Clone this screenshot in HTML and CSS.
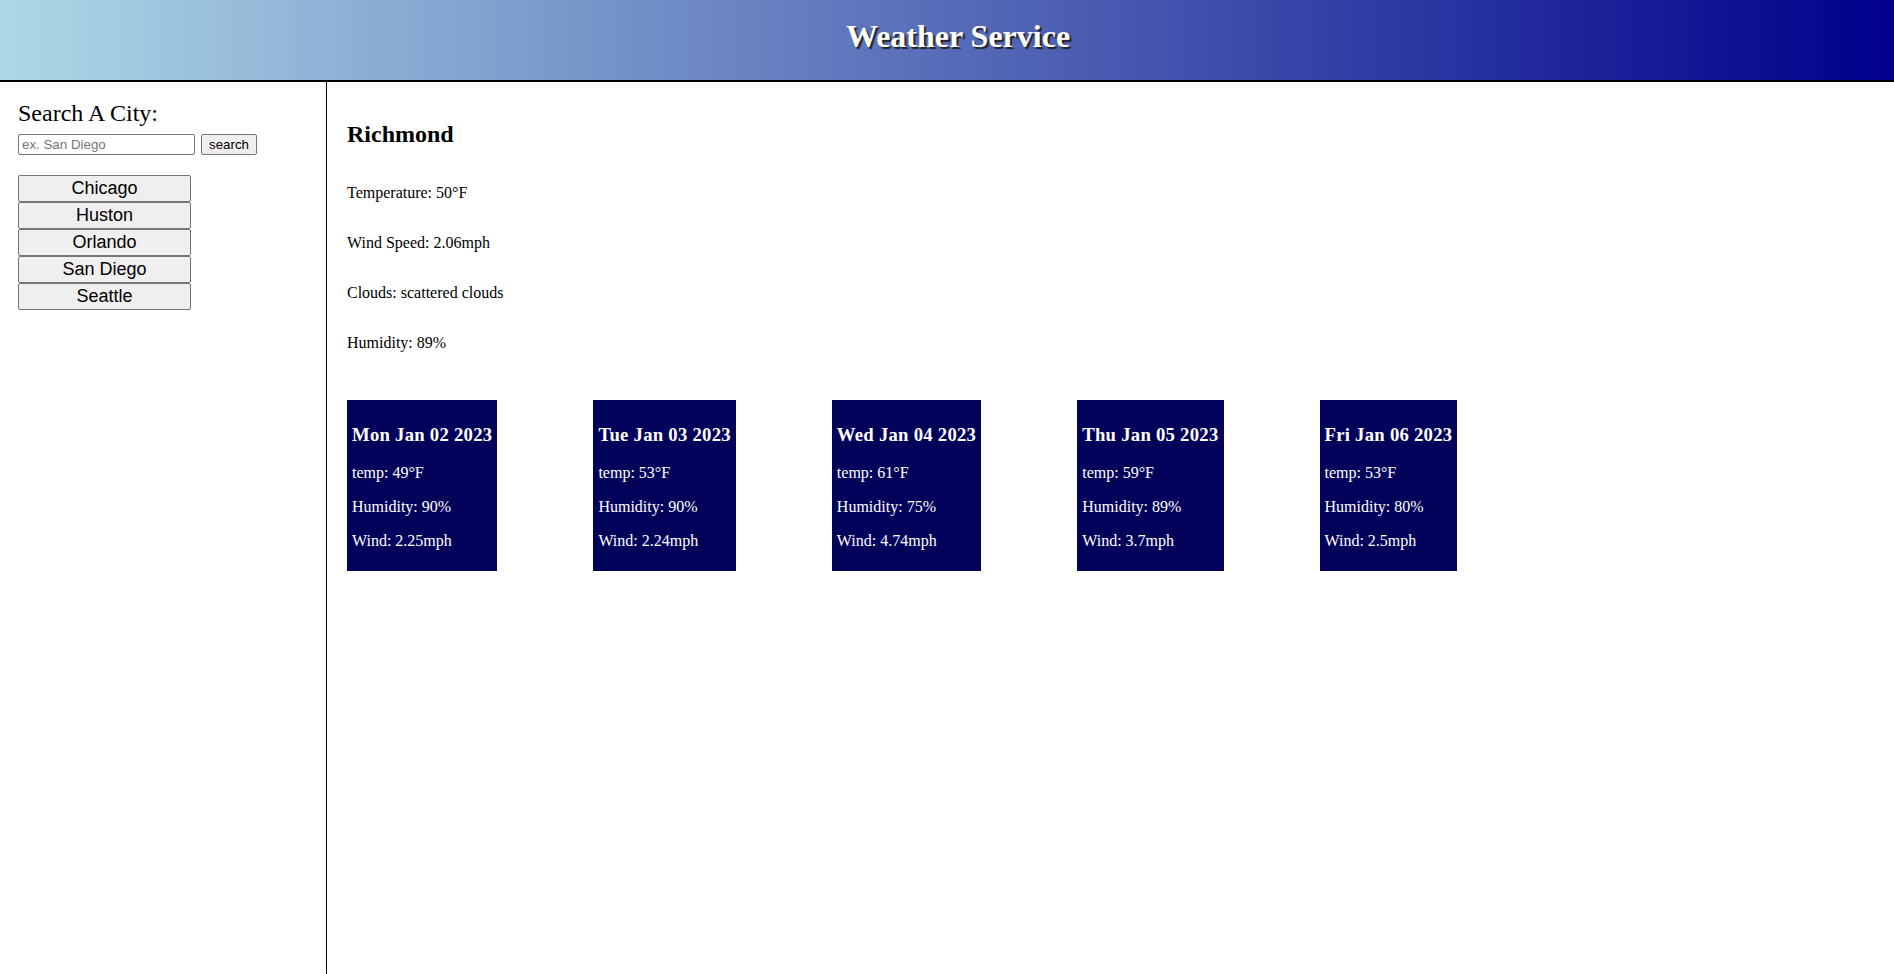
FILE: index.html
```html
<!DOCTYPE html>
<html lang="en">
<head>
<meta charset="utf-8">
<title>Weather Service</title>
<link rel="stylesheet" href="styles.css">
</head>
<body>
<header class="site-header">
  <h1 class="site-title">Weather Service</h1>
</header>
<div class="layout">
  <aside class="sidebar">
    <label class="search-label" for="city">Search A City:</label>
    <div class="search-row">
      <input id="city" class="search-input" type="text" placeholder="ex. San Diego">
      <button class="search-btn" type="button">search</button>
    </div>
    <div class="city-list">
      <button class="city-btn" type="button">Chicago</button>
      <button class="city-btn" type="button">Huston</button>
      <button class="city-btn" type="button">Orlando</button>
      <button class="city-btn" type="button">San Diego</button>
      <button class="city-btn" type="button">Seattle</button>
    </div>
  </aside>
  <main class="main">
    <h2 class="city-name">Richmond</h2>
    <p class="info">Temperature: 50°F</p>
    <p class="info">Wind Speed: 2.06mph</p>
    <p class="info">Clouds: scattered clouds</p>
    <p class="info">Humidity: 89%</p>
    <div class="forecast">
      <div class="card">
        <h3 class="card-date">Mon Jan 02 2023</h3>
        <p class="card-line">temp: 49°F</p>
        <p class="card-line">Humidity: 90%</p>
        <p class="card-line">Wind: 2.25mph</p>
      </div>
      <div class="card">
        <h3 class="card-date">Tue Jan 03 2023</h3>
        <p class="card-line">temp: 53°F</p>
        <p class="card-line">Humidity: 90%</p>
        <p class="card-line">Wind: 2.24mph</p>
      </div>
      <div class="card">
        <h3 class="card-date">Wed Jan 04 2023</h3>
        <p class="card-line">temp: 61°F</p>
        <p class="card-line">Humidity: 75%</p>
        <p class="card-line">Wind: 4.74mph</p>
      </div>
      <div class="card">
        <h3 class="card-date">Thu Jan 05 2023</h3>
        <p class="card-line">temp: 59°F</p>
        <p class="card-line">Humidity: 89%</p>
        <p class="card-line">Wind: 3.7mph</p>
      </div>
      <div class="card">
        <h3 class="card-date">Fri Jan 06 2023</h3>
        <p class="card-line">temp: 53°F</p>
        <p class="card-line">Humidity: 80%</p>
        <p class="card-line">Wind: 2.5mph</p>
      </div>
    </div>
  </main>
</div>
</body>
</html>
```
FILE: styles.css
```css
html, body {
  margin: 0;
  padding: 0;
}
body {
  font-family: "Liberation Serif", "Times New Roman", serif;
  font-size: 16px;
  color: #000;
  background: #fff;
}
.site-header {
  height: 82px;
  box-sizing: border-box;
  padding-top: 18px;
  padding-left: 22px;
  background: linear-gradient(to right, #add8e6, #00008b);
  border-bottom: 2px solid #000;
  text-align: center;
}
.site-title {
  margin: 0;
  font-size: 32px;
  font-weight: bold;
  color: #fff;
  text-shadow: 2px 2px 1px #222;
}
.layout {
  display: flex;
  min-height: calc(100vh - 82px);
}
.sidebar {
  width: 327px;
  flex: none;
  box-sizing: border-box;
  padding: 18px;
  border-right: 1px solid #000;
}
.search-label {
  display: block;
  font-size: 24px;
  margin-bottom: 7px;
}
.search-row {
  display: flex;
  gap: 6px;
  align-items: center;
}
.search-input {
  width: 177px;
  height: 21px;
  box-sizing: border-box;
  margin: 0;
  padding: 1px 3px;
  border: 1px solid #767676;
  border-radius: 2px;
  font-family: "Liberation Sans", Arial, sans-serif;
  font-size: 13.33px;
}
.search-input::placeholder {
  color: #757575;
}
.search-btn {
  height: 21px;
  box-sizing: border-box;
  margin: 0;
  padding: 1px 7px;
  border: 1px solid #767676;
  border-radius: 2px;
  background: #efefef;
  color: #000;
  font-family: "Liberation Sans", Arial, sans-serif;
  font-size: 13.33px;
  line-height: 15px;
}
.city-list {
  margin-top: 20px;
  display: flex;
  flex-direction: column;
}
.city-btn {
  width: 173px;
  height: 27px;
  box-sizing: border-box;
  margin: 0;
  padding: 2px 6px;
  border: 1px solid #767676;
  border-radius: 2px;
  background: #efefef;
  color: #000;
  font-family: "Liberation Sans", Arial, sans-serif;
  font-size: 18px;
  line-height: 21px;
  text-align: center;
}
.main {
  flex: 1;
  padding: 19px 20px;
}
.city-name {
  font-size: 24px;
  font-weight: bold;
  margin: 20px 0 36px;
}
.info {
  margin: 32px 0;
}
.forecast {
  display: flex;
  align-items: flex-start;
  gap: 96px;
  margin-top: 48px;
}
.card {
  background: #02025a;
  color: #fff;
  padding: 5px;
}
.card-date {
  font-size: 18.72px;
  font-weight: bold;
  letter-spacing: 0.25px;
  margin: 18.72px 0;
}
.card-line {
  margin: 16px 0;
}
```
